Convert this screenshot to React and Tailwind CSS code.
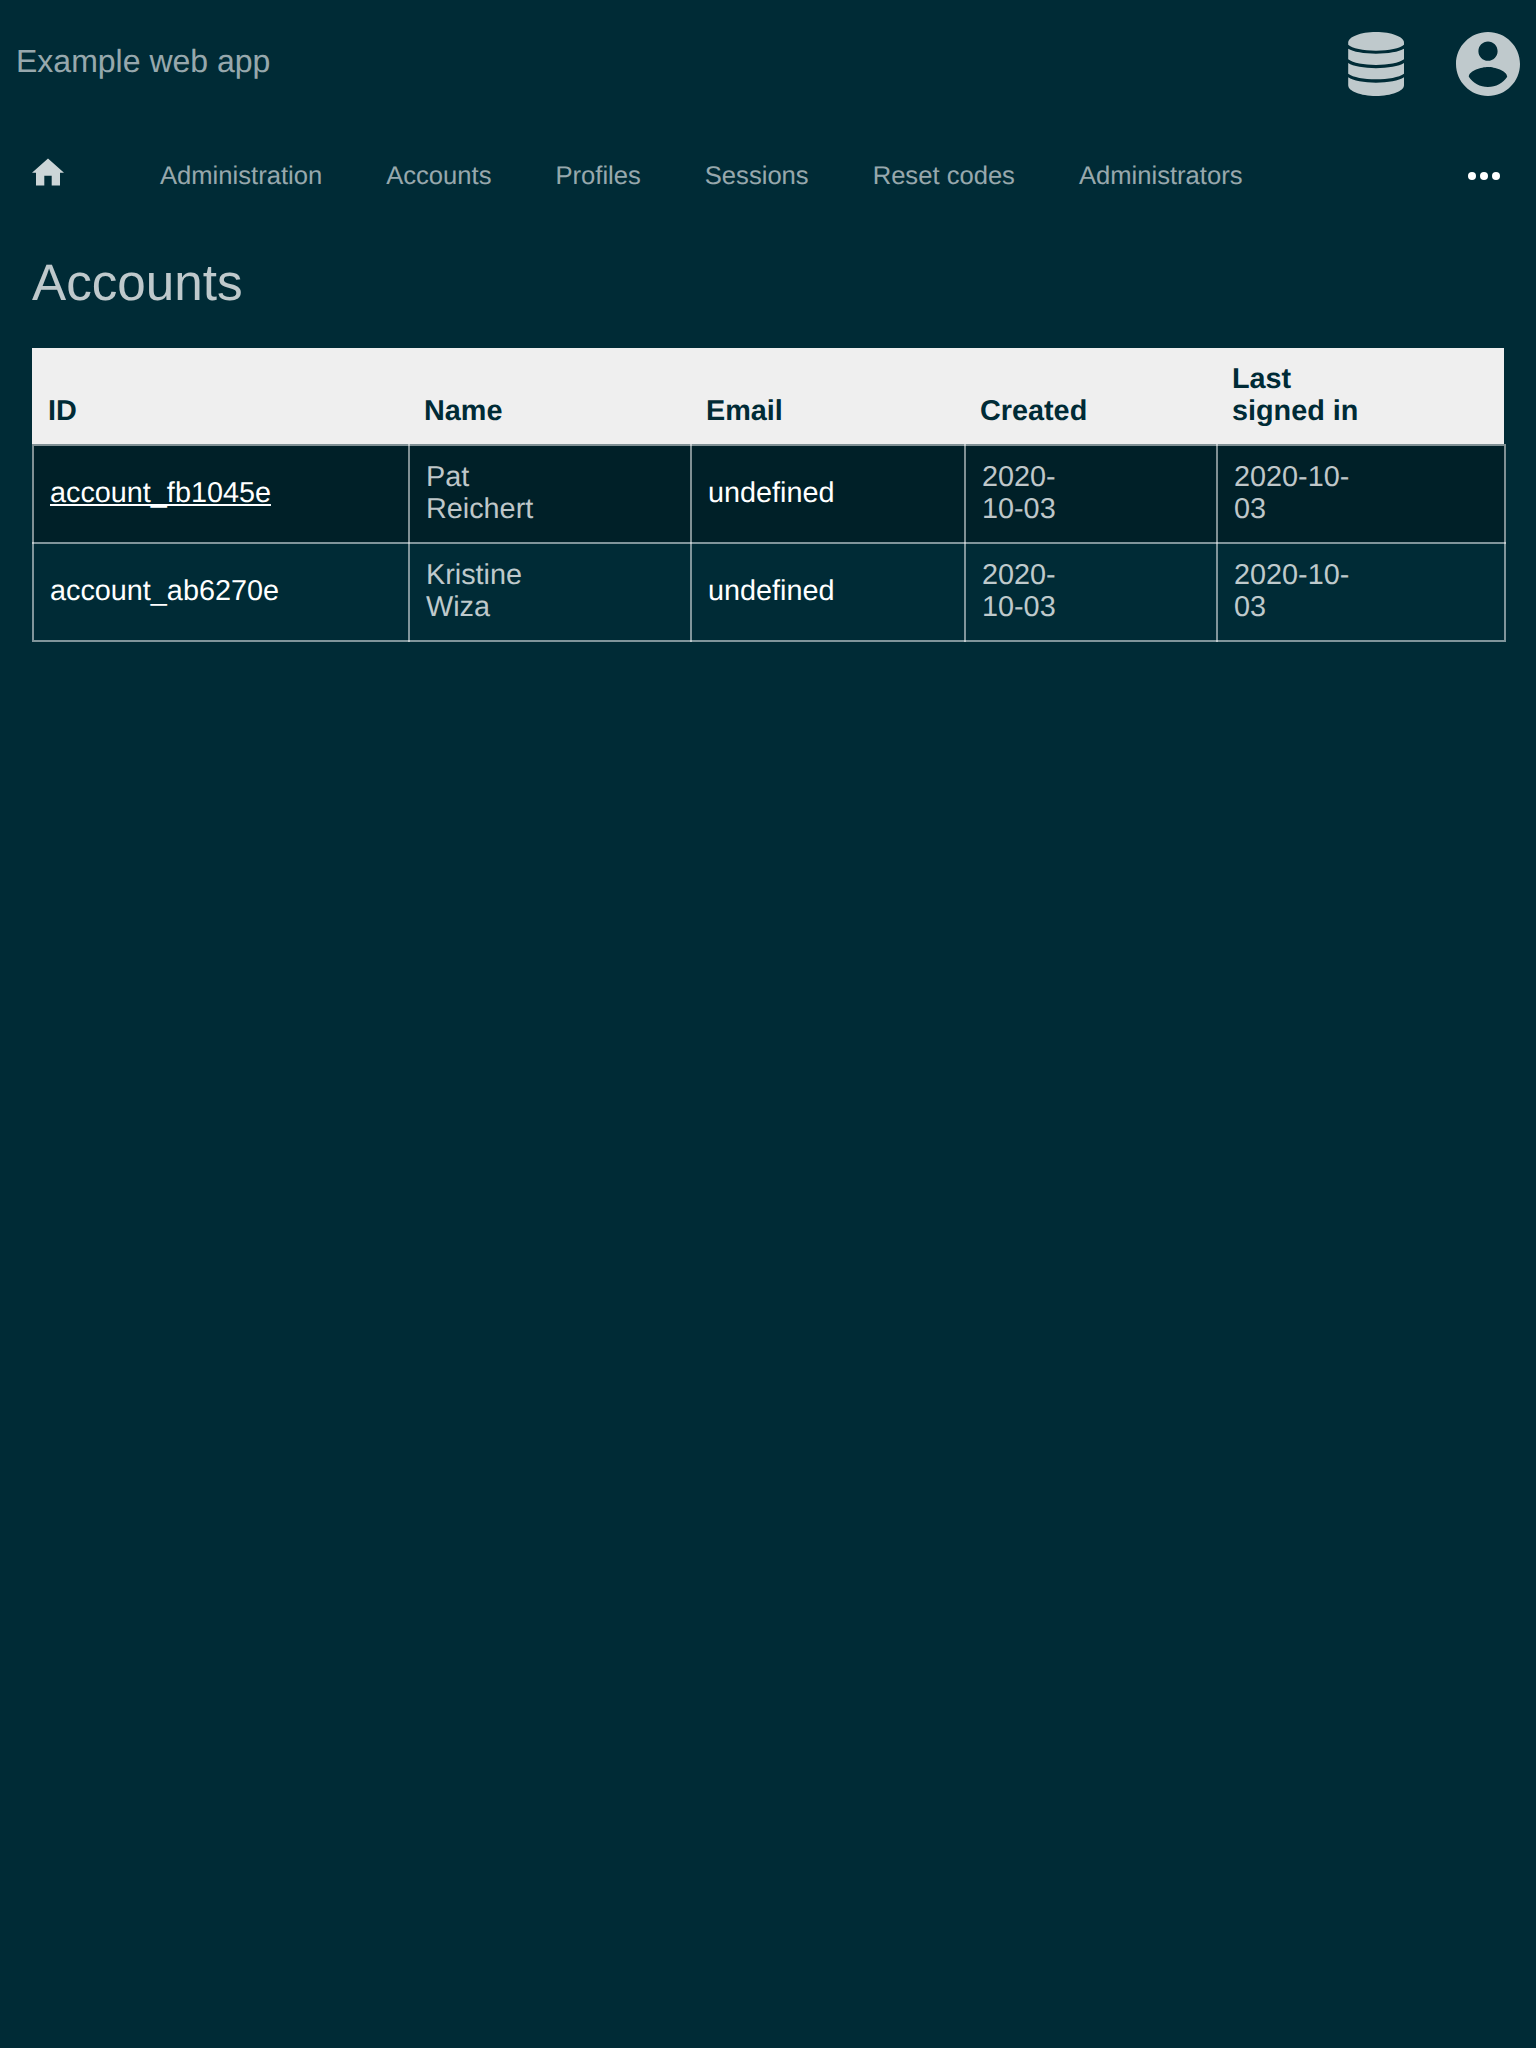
const links = ["Administration", "Accounts", "Profiles", "Sessions", "Reset codes", "Administrators"];
const columns = ["ID", "Name", "Email", "Created", "Last signed in"];
const rows = [
  { id: "account_fb1045e", name: "Pat Reichert", active: true },
  { id: "account_ab6270e", name: "Kristine Wiza", active: false },
];

function DatabaseIcon() {
  return (
    <svg viewBox="0 0 56 64" className="h-16 w-14" fill="currentColor">
      <path d="M28 0C43.5 0 56 4.8 56 10.7V12.8C52 16.4 41 18.7 28 18.7S4 16.4 .2 12.800V10.700C.2 4.800 12.500 0 28 0Z" />
      <path d="M.2 16.800C5 19.900 16 21.700 28 21.700S51 19.900 56 16.800V27.200C51 30.900 40 32.900 28 32.900S5 30.900 .2 27.200Z" />
      <path d="M.2 31.100C5 34.300 16 36.200 28 36.200S51 34.300 56 31.100V41.700C51 45.300 40 47.300 28 47.300S5 45.300 .2 41.700Z" />
      <path d="M.2 45.300C5 48.800 16 50.700 28 50.700S51 48.800 56 45.300V53.300C56 59.200 43.500 64 28 64S.2 59.200 .2 53.300Z" />
    </svg>
  );
}

function AccountIcon() {
  return (
    <svg viewBox="2 2 20 20" className="size-16" fill="currentColor">
      <path d="M12 2C6.480 2 2 6.480 2 12s4.480 10 10 10 10-4.480 10-10S17.520 2 12 2zm0 3c1.660 0 3 1.340 3 3s-1.340 3-3 3-3-1.340-3-3 1.340-3 3-3zm0 14.200c-2.500 0-4.710-1.280-6-3.220.030-1.990 4-3.080 6-3.080 1.990 0 5.970 1.090 6 3.080-1.290 1.940-3.500 3.220-6 3.220z" />
    </svg>
  );
}

function HomeIcon() {
  return (
    <svg viewBox="0 0 32 28" className="-mt-2 mr-24 h-7 w-8 text-white/80" fill="currentColor">
      <path d="M16 .5 32 14.800H28V27.600H19.700V17.700H12.300V27.600H4V14.800H0Z" />
    </svg>
  );
}

function Cell({ first, last, edge, children }) {
  const top = first && edge ? "pt-[14px]" : "-mt-[2px] pt-4";
  const bottom = last && !edge ? "-mb-[2px] pb-[18px]" : "pb-4";
  return (
    <div className={"flex items-center border-l-2 border-white/50 pl-4 " + top + " " + bottom}>
      {children}
    </div>
  );
}

export default function App() {
  return (
    <div className="min-h-[2048px] bg-[#002b36] font-['Liberation_Sans',Arial,sans-serif] text-white [text-rendering:geometricPrecision]">
      <header className="flex h-32 items-start justify-between px-4 pt-8">
        <div className="mt-[11px] text-[32px] leading-[37px] text-white/60">Example web app</div>
        <div className="flex gap-[52px] text-white/75">
          <DatabaseIcon />
          <AccountIcon />
        </div>
      </header>
      <nav className="flex h-24 items-center px-8 text-[25.6px] text-white/60">
        <HomeIcon />
        <ul className="flex gap-16 leading-[30px]">
          {links.map((l) => (
            <li key={l}>{l}</li>
          ))}
        </ul>
        <div className="mr-1 ml-auto flex gap-1">
          <i className="size-2 rounded-full bg-white" />
          <i className="size-2 rounded-full bg-white" />
          <i className="size-2 rounded-full bg-white" />
        </div>
      </nav>
      <main className="px-8">
        <h1 className="pt-[29px] text-[51.2px] leading-[59px] text-white/75">Accounts</h1>
        <div className="mt-9 text-[28.8px] leading-8">
          <div className="grid h-24 grid-cols-[376px_282px_274px_252px_288px] items-end bg-[#efefef] pb-[17px] font-bold text-[#002b36]">
            {columns.map((c) => (
              <div key={c} className="px-4">
                <div className="max-w-[150px]">{c}</div>
              </div>
            ))}
          </div>
          <div className="w-[1474px] border-b-2 border-white/50">
            {rows.map((r, i) => {
              const pos = { first: i === 0, last: i === rows.length - 1 };
              return (
                <div
                  key={r.id}
                  className={
                    "grid h-[98px] grid-cols-[376px_282px_274px_252px_288px_2px] border-t-2 border-white/50 " +
                    (r.active ? "bg-[#002028]" : "")
                  }
                >
                  <Cell {...pos} edge>
                    <a
                      className={
                        r.active
                          ? "underline decoration-2 underline-offset-2 [text-decoration-skip-ink:none]"
                          : ""
                      }
                    >
                      {r.id}
                    </a>
                  </Cell>
                  <Cell {...pos}>
                    <span className="w-[120px] text-white/75">{r.name}</span>
                  </Cell>
                  <Cell {...pos}>undefined</Cell>
                  <Cell {...pos}>
                    <span className="w-[100px] text-white/75">2020-10-03</span>
                  </Cell>
                  <Cell {...pos}>
                    <span className="w-[130px] text-white/75">2020-10-03</span>
                  </Cell>
                  <div className={"bg-white/50 " + (i === 0 ? "" : "-mt-[2px]")} />
                </div>
              );
            })}
          </div>
        </div>
      </main>
    </div>
  );
}
